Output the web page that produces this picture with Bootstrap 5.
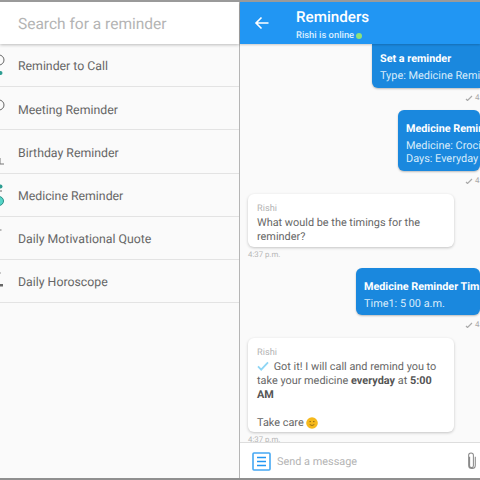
<!DOCTYPE html>
<html lang="en"><head><meta charset="utf-8"><title>Reminders</title>
<link href="https://cdn.jsdelivr.net/npm/bootstrap@5.3.0/dist/css/bootstrap.min.css" rel="stylesheet">
<style>
html,body{width:480px;height:480px;overflow:hidden;margin:0}
body{font-family:Roboto,sans-serif;background:#fff;color:#5f5f5f;border-top:2px solid #9a9a9a;border-bottom:2px solid #8f8f8f;text-rendering:geometricPrecision}
.shell{height:476px}
.leftp{width:240px;flex:none;background:#fafafa;border-right:1px solid #b5b5b5}
.searchb{height:42px;background:#fff;padding-left:18px;font-size:15.5px;color:#b4b4b4;box-shadow:0 1px 3px rgba(0,0,0,.25);position:relative;z-index:1;line-height:44px}
.rowi{height:43.2px;border-bottom:1px solid #e3e3e3;font-size:12.3px;color:#666;padding-top:5px}
.rowi svg{width:18px;height:42px;flex:none;display:block}
.rightp{flex:1 1 0;min-width:0;background:#fafafa;position:relative}
.headb{height:42px;background:#2196f3;color:#fff;flex:none;position:relative;z-index:2;box-shadow:0 1px 2px rgba(0,0,0,.2)}
.headb svg{width:16px;height:16px;margin:0 26px 0 14px;flex:none}
.headtx{margin-top:3px}
.titleh{font-size:15.2px;font-weight:500;line-height:20px}
.subh{font-size:9.4px;font-weight:500;line-height:12px;margin-top:3px;color:#dcefff}
.dotg{width:6px;height:6px;border-radius:50%;background:#8ee27a;margin-left:2px;display:inline-block}
.chatz{flex:1 1 0;min-height:0;overflow:hidden}
.outb{background:#1a88de;color:#d8ecfb;border-radius:6px;font-size:10.9px;line-height:13px;padding:11px 8px 0;white-space:nowrap;box-shadow:0 1px 2px rgba(0,0,0,.25)}
.outb b{display:block;font-weight:700;color:#fff;font-size:10.8px;margin-bottom:2px;line-height:16px}
.o1{margin-left:132px;height:44px;padding-top:7px;border-radius:0 0 0 6px}
.o2{margin-left:158px;margin-top:7px;height:61px}
.o3{margin-left:116px;margin-top:8px;height:47px}
.ticks{height:10px;margin-top:5px;margin-left:225px;font-size:8px;color:#aaa;line-height:10px;white-space:nowrap}
.ticks svg{width:8px;height:6px}
.inb{margin-left:8px;width:206px;background:#fff;border-radius:6px;box-shadow:0 1px 3px rgba(0,0,0,.22);padding:9px 9px 0;font-size:10.9px;line-height:14px;color:#666}
.i1{margin-top:8px;height:53px}
.i2{margin-top:8px;height:94px}
.who{font-size:9.2px;color:#b3b3b3;line-height:11px;margin-bottom:2px}
.when{font-size:7.8px;color:#b5b5b5;margin:3px 0 0 8px;line-height:10px}
.inb strong{font-weight:700;color:#555}
.ck{width:12px;height:10px;vertical-align:-1px;margin:0 2px 0 0}
.smile{display:inline-block;width:12px;height:12px;vertical-align:-3px}
.footb{height:36px;background:#fff;border-top:1px solid #ddd;flex:none;font-size:10.9px;color:#b4b4b4;position:relative;z-index:2;padding-top:1px}
.footb span{padding-top:2px}
.footb svg.mn{width:19px;height:19px;margin:0 6px 0 12px;flex:none}
.footb svg.cl{width:11px;height:18px;margin:0 3px 0 auto;flex:none}
</style></head><body>
<div class="d-flex shell">
  <div class="leftp d-flex flex-column">
    <div class="searchb">Search for a reminder</div>
    <div class="rowi d-flex align-items-center"><svg viewBox="0 0 18 42"><circle cx="-1" cy="13" r="5" fill="none" stroke="#666" stroke-width="1"/><circle cx="0.5" cy="26" r="2" fill="#2e9d92"/></svg>Reminder to Call</div>
    <div class="rowi d-flex align-items-center"><svg viewBox="0 0 18 42"><circle cx="-1" cy="15" r="5" fill="none" stroke="#666" stroke-width="1"/></svg>Meeting Reminder</div>
    <div class="rowi d-flex align-items-center"><svg viewBox="0 0 18 42"><path d="M0 25v6h4" fill="none" stroke="#777"/></svg>Birthday Reminder</div>
    <div class="rowi d-flex align-items-center"><svg viewBox="0 0 18 42"><circle cx="0.5" cy="10.500" r="2" fill="#2e9d92"/><path d="M0 15h2" stroke="#666"/><circle cx="-1" cy="25" r="4.500" fill="#55d5c8" stroke="#2e8f85"/></svg>Medicine Reminder</div>
    <div class="rowi d-flex align-items-center"><svg viewBox="0 0 18 42"><path d="M0 11h1.500" stroke="#777"/></svg>Daily Motivational Quote</div>
    <div class="rowi d-flex align-items-center"><svg viewBox="0 0 18 42"><path d="M0 10h1" stroke="#999"/><rect x="0" y="21" width="3" height="2.500" fill="#666"/></svg>Daily Horoscope</div>
  </div>
  <div class="rightp d-flex flex-column">
    <div class="headb d-flex align-items-center">
      <svg viewBox="0 0 16 16"><path d="M14.500 8H2M7.500 2.500 2 8l5.500 5.500" fill="none" stroke="#fff" stroke-width="1.600"/></svg>
      <div class="headtx"><div class="titleh">Reminders</div><div class="subh d-flex align-items-center">Rishi is online<span class="dotg"></span></div></div>
    </div>
    <div class="chatz">
      <div class="outb o1"><b>Set a reminder</b>Type: Medicine Reminder</div>
      <div class="ticks"><svg viewBox="0 0 8 6"><path d="M1 4l1.500 1.500L7 1" fill="none" stroke="#aaa" stroke-width="1.200"/></svg> 4:37 p.m.</div>
      <div class="outb o2"><b>Medicine Reminder</b>Medicine: Crocin<br>Days: Everyday</div>
      <div class="ticks"><svg viewBox="0 0 8 6"><path d="M1 4l1.500 1.500L7 1" fill="none" stroke="#aaa" stroke-width="1.200"/></svg> 4:37 p.m.</div>
      <div class="inb i1"><div class="who">Rishi</div>What would be the timings for the reminder?</div>
      <div class="when">4:37 p.m.</div>
      <div class="outb o3"><b>Medicine Reminder Timings</b>Time1: 5 00 a.m.</div>
      <div class="ticks"><svg viewBox="0 0 8 6"><path d="M1 4l1.500 1.500L7 1" fill="none" stroke="#aaa" stroke-width="1.200"/></svg> 4:37 p.m.</div>
      <div class="inb i2"><div class="who">Rishi</div><svg class="ck" viewBox="0 0 13 11"><path d="M1 6l3.500 3.500L12 1.500" fill="none" stroke="#8fd6f5" stroke-width="2"/></svg> Got it! I will call and remind you to take your medicine <strong>everyday</strong> at <strong>5:00 AM</strong><br><br>Take care <svg class="smile" viewBox="0 0 13 13"><circle cx="6.500" cy="6.500" r="6.300" fill="#f6b91c"/><circle cx="4.500" cy="5" r=".8" fill="#7a5a10"/><circle cx="8.500" cy="5" r=".8" fill="#7a5a10"/><path d="M4 8.200q2.500 2 5 0" fill="none" stroke="#7a5a10" stroke-width=".8"/></svg></div>
      <div class="when">4:37 p.m.</div>
    </div>
    <div class="footb d-flex align-items-center">
      <svg class="mn" viewBox="0 0 19 19"><rect x="1" y="1" width="17" height="17" rx="1" fill="none" stroke="#45a8f3" stroke-width="1.600"/><path d="M5 5.500h9M5 9.500h9M5 13.500h9" stroke="#2196f3" stroke-width="1.700"/></svg>
      <span>Send a message</span>
      <svg class="cl" viewBox="0 0 11 19"><path d="M3.500 5v9.500a2 2 0 0 0 4 0V3.500a2.500 2.500 0 0 0-5 0V14a3.500 3.500 0 0 0 7 0V5" fill="none" stroke="#8a8a8a" stroke-width="1.100"/></svg>
    </div>
  </div>
</div>
<script src="https://cdn.jsdelivr.net/npm/bootstrap@5.3.0/dist/js/bootstrap.bundle.min.js"></script>
</body></html>
